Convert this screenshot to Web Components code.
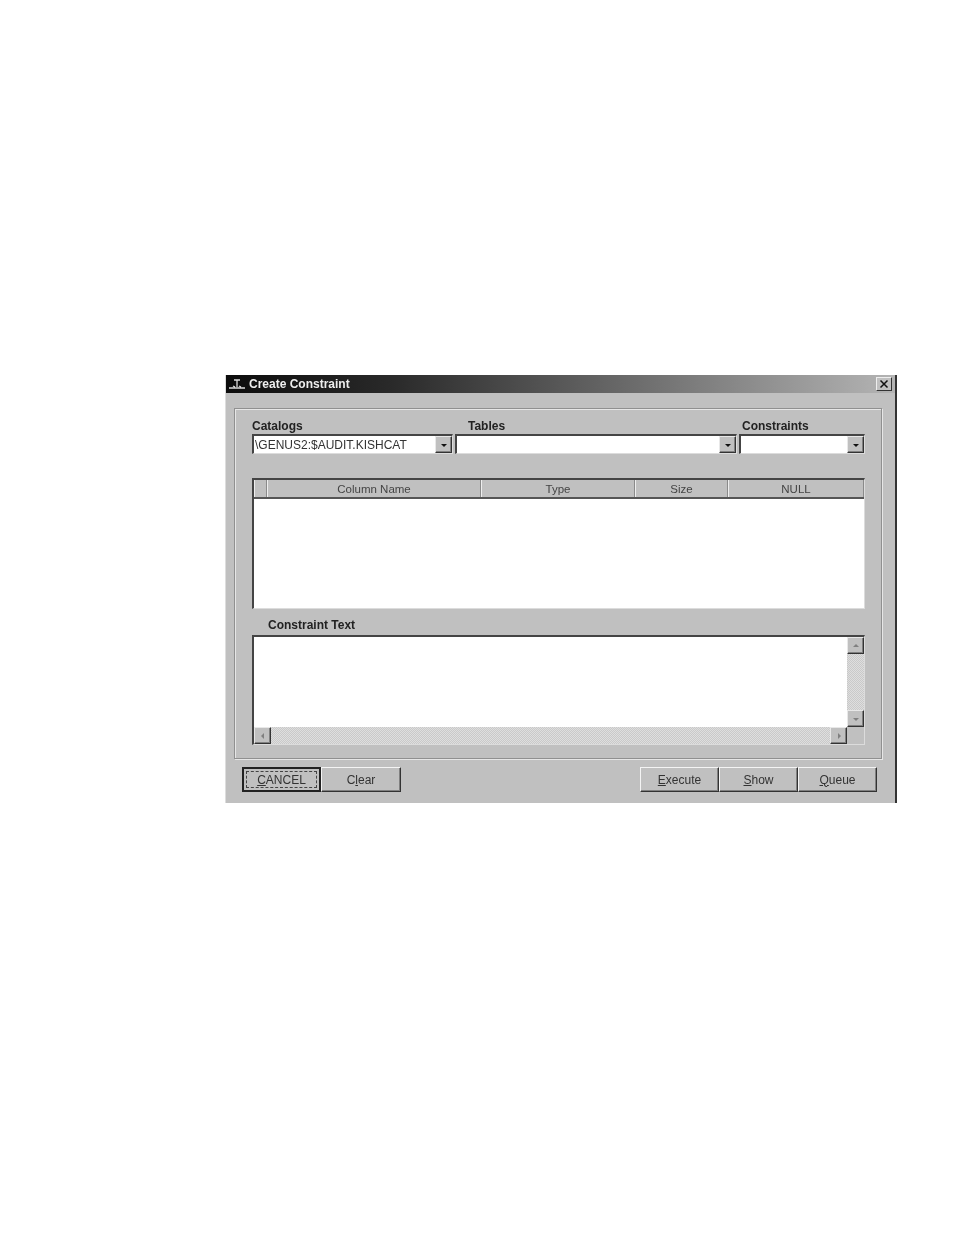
<!DOCTYPE html>
<html>
<head>
<meta charset="utf-8">
<title>Create Constraint</title>
<style>
  html, body { margin: 0; background: #fff; }
  body { padding: 375px 0 0 225px; height: 860px; font-family: "Liberation Sans", sans-serif; }
  create-constraint { filter: blur(0.55px); }
</style>
</head>
<body>
<create-constraint></create-constraint>
<script>
// кнопка с подчёркнутой буквой, focused рисует пунктирную рамку
class WinButton extends HTMLElement {
  constructor() {
    super()
    this.attachShadow({ mode: 'open' }).innerHTML = `
      <style>
        :host { display: block; box-sizing: border-box; width: 79px; height: 25px; background: #c0c0c0;
          border: 1px solid; border-color: #f4f4f4 #333 #333 #f4f4f4;
          box-shadow: inset -1px -1px 0 #808080; font-size: 12px; color: #333; }
        :host([focused]) { border: 2px solid #222; box-shadow: none; }
        div { box-sizing: border-box; height: 100%; display: flex; align-items: center; justify-content: center; }
        :host([focused]) div { margin: 2px 0 0 2px; height: 17px; width: 71px; border: 1px dashed #444; }
        ::slotted(u) { text-underline-offset: 1px; }
      </style>
      <div><slot></slot></div>`
  }
}

class WinArrow extends HTMLElement {
  constructor() {
    super()
    const dir = this.getAttribute('dir') || 'down'
    const shapes = {
      down: '2,4 8,4 5,7', up: '2,6 8,6 5,3', left: '6,2 6,8 3,5', right: '4,2 4,8 7,5'
    }
    const fill = this.hasAttribute('dim') ? '#808080' : '#111'
    this.attachShadow({ mode: 'open' }).innerHTML = `
      <style>
        :host { display: flex; align-items: center; justify-content: center; box-sizing: border-box;
          width: 17px; height: 17px; background: #c0c0c0; flex: none;
          border: 1px solid; border-color: #e8e8e8 #333 #333 #e8e8e8;
          box-shadow: inset -1px -1px 0 #808080; }
        svg { width: 10px; height: 10px; }
      </style>
      <svg viewBox="0 0 10 10"><polygon points="${shapes[dir]}" fill="${fill}"/></svg>`
  }
}

class WinCombo extends HTMLElement {
  constructor() {
    super()
    this.attachShadow({ mode: 'open' }).innerHTML = `
      <style>
        :host { display: flex; box-sizing: border-box; height: 20px; background: #fff; align-items: center;
          border-top: 2px solid #444; border-left: 2px solid #444; border-right: 1px solid #dcdcdc; border-bottom: 1px solid #dcdcdc;
          font-size: 12px; color: #333; }
        div { flex: 1; padding-left: 1px; white-space: nowrap; overflow: hidden; }
      </style>
      <div><slot></slot></div>
      <win-arrow></win-arrow>`
  }
}

class WinGrid extends HTMLElement {
  constructor() {
    super()
    const cols = ['', 'Column Name', 'Type', 'Size', 'NULL']
    this.attachShadow({ mode: 'open' }).innerHTML = `
      <style>
        :host { display: block; box-sizing: border-box; height: 131px; background: #fff;
          border-top: 2px solid #444; border-left: 2px solid #444; border-right: 1px solid #dcdcdc; border-bottom: 1px solid #dcdcdc; }
        header { display: grid; grid-template-columns: 13px 214px 154px 93px 1fr; height: 17px; background: #c0c0c0; border-bottom: 2px solid #555; }
        span { display: flex; align-items: center; justify-content: center; font-size: 11.5px; color: #444;
          border-left: 1px solid #eee; border-right: 1px solid #8a8a8a; }
      </style>
      <header>${cols.map(c => `<span>${c}</span>`).join('')}</header>`
  }
}

class WinMemo extends HTMLElement {
  constructor() {
    super()
    this.attachShadow({ mode: 'open' }).innerHTML = `
      <style>
        :host { display: grid; grid-template-columns: 1fr 17px; grid-template-rows: 1fr 17px; box-sizing: border-box; height: 110px; background: #fff;
          border-top: 2px solid #444; border-left: 2px solid #444; border-right: 1px solid #dcdcdc; border-bottom: 1px solid #dcdcdc; }
        .v, .h { display: flex; justify-content: space-between;
          background: repeating-conic-gradient(#dedede 0 25%, #c9c9c9 0 50%) 0 0 / 2px 2px; }
        .v { flex-direction: column; }
        .corner { background: #c0c0c0; }
      </style>
      <div class="body"></div>
      <div class="v"><win-arrow dir="up" dim></win-arrow><win-arrow dir="down" dim></win-arrow></div>
      <div class="h"><win-arrow dir="left" dim></win-arrow><win-arrow dir="right" dim></win-arrow></div>
      <div class="corner"></div>`
  }
}

class CreateConstraint extends HTMLElement {
  constructor() {
    super()
    this.attachShadow({ mode: 'open' }).innerHTML = `
      <style>
        :host { display: block; width: 672px; height: 428px; box-sizing: border-box; background: #c0c0c0;
          border-right: 2px solid #333; border-left: 1px solid #ddd; font-family: "Liberation Sans", sans-serif; }
        .title { height: 18px; display: flex; align-items: center; gap: 3px; padding: 0 3px 0 2px;
          background: linear-gradient(90deg, #0c0c0c 0%, #2a2a2a 25%, #6a6a6a 60%, #b4b4b4 100%); color: #eee;
          font-size: 12px; font-weight: bold; }
        .title svg { width: 18px; height: 12px; flex: none; }
        .title b { flex: 1; }
        .close { width: 16px; height: 14px; box-sizing: border-box; background: #c0c0c0; display: flex; align-items: center; justify-content: center;
          border: 1px solid; border-color: #eee #333 #333 #eee; }
        .close svg { width: 10px; height: 10px; }
        .group { box-sizing: border-box; margin: 15px 13px 0 8px; height: 351px; padding: 11px 16px 0 17px;
          border: 1px solid #909090; box-shadow: inset 1px 1px 0 #e6e6e6, 1px 1px 0 #e6e6e6; }
        .pickers { display: grid; grid-template-columns: 201px 282px 126px; column-gap: 2px; }
        label { display: block; height: 14px; line-height: 13px; font-size: 12px; font-weight: bold; color: #222; }
        .tables label { padding-left: 13px; }
        .constraints label { padding-left: 3px; }
        win-grid { margin-top: 24px; }
        .text-label { padding-left: 16px; margin-top: 10px; height: 16px; line-height: 13px; }
        .actions { display: flex; margin: 8px 18px 0 16px; }
        .gap { flex: 1; }
        win-button + win-button { margin-left: 0; }
        win-button.clear { width: 80px; }
      </style>
      <div class="title">
        <svg viewBox="0 0 18 12"><path d="M1 10h16M9 2v7M6 2h6M5 8l2 1M11 8l2 1" stroke="#ddd" stroke-width="1.3" fill="none"/></svg>
        <b>Create Constraint</b>
        <span class="close"><svg viewBox="0 0 10 10"><path d="M1.5 1.5l7 7M8.5 1.5l-7 7" stroke="#111" stroke-width="1.5"/></svg></span>
      </div>
      <div class="group">
        <div class="pickers">
          <div><label>Catalogs</label><win-combo>\\GENUS2:$AUDIT.KISHCAT</win-combo></div>
          <div class="tables"><label>Tables</label><win-combo></win-combo></div>
          <div class="constraints"><label>Constraints</label><win-combo></win-combo></div>
        </div>
        <win-grid></win-grid>
        <label class="text-label">Constraint Text</label>
        <win-memo></win-memo>
      </div>
      <div class="actions">
        <win-button focused><span style="text-decoration:underline">C</span>ANCEL</win-button>
        <win-button class="clear">C<span style="text-decoration:underline">l</span>ear</win-button>
        <div class="gap"></div>
        <win-button><span style="text-decoration:underline">E</span>xecute</win-button>
        <win-button><span style="text-decoration:underline">S</span>how</win-button>
        <win-button><span style="text-decoration:underline">Q</span>ueue</win-button>
      </div>`
  }
}

customElements.define('win-arrow', WinArrow)
customElements.define('win-button', WinButton)
customElements.define('win-combo', WinCombo)
customElements.define('win-grid', WinGrid)
customElements.define('win-memo', WinMemo)
customElements.define('create-constraint', CreateConstraint)
</script>
</body>
</html>
